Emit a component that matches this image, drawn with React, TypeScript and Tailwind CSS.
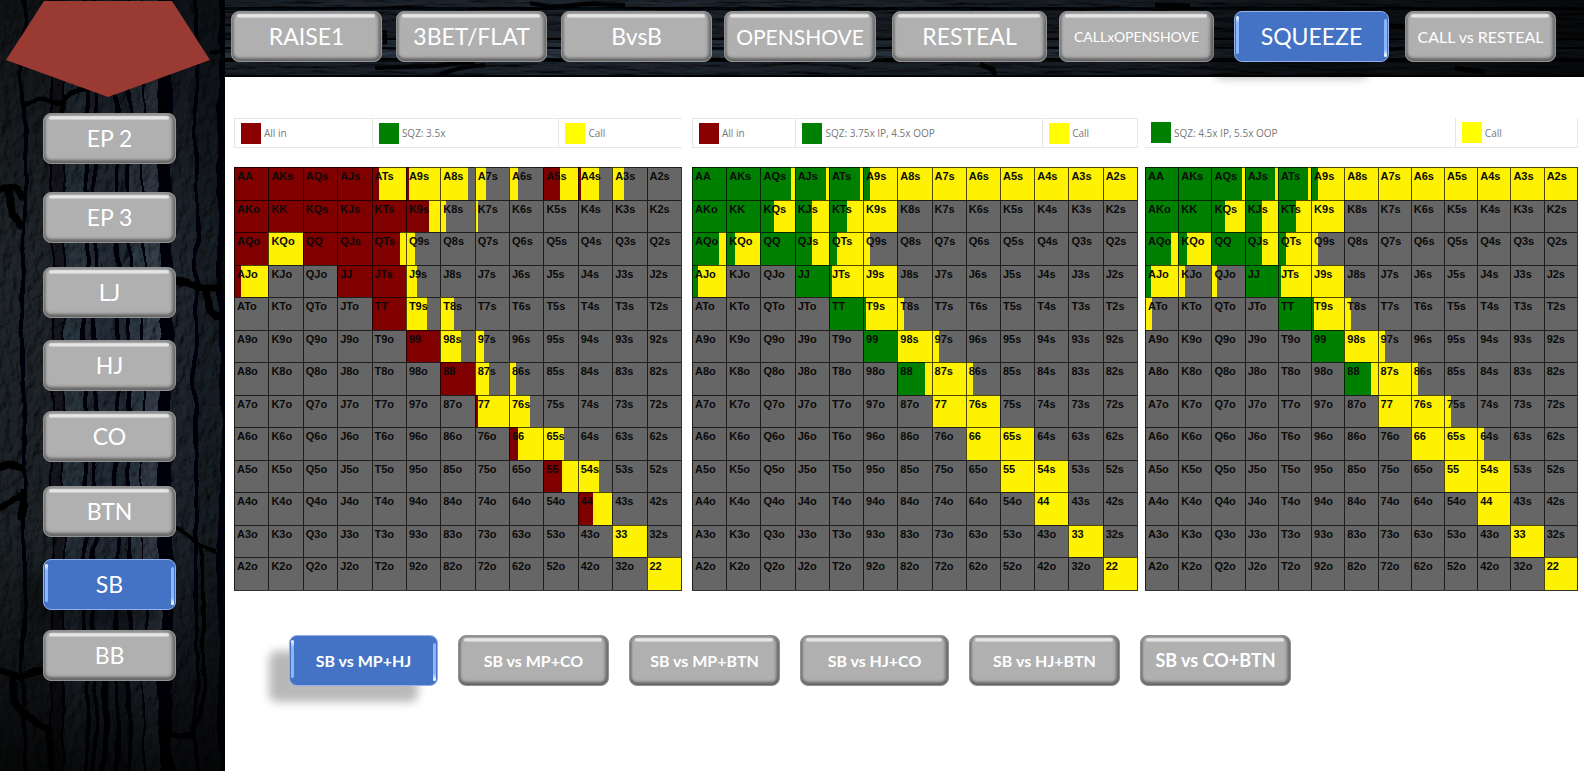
import { clsx } from "clsx";

type Split = [action: number, call: number];
type Chart = {
  name: string;
  actionColor: string;
  className: string;
  legend: { label: string; swatch: string; grow: string }[];
  frame: string;
  full: string[];
  mixed: Record<string, Split>;
  call: string[];
};

const RANKS = ["A", "K", "Q", "J", "T", "9", "8", "7", "6", "5", "4", "3", "2"];
const RED = "#800000";
const GREEN = "#008000";
const YELLOW = "#fff200";
const FOLD = "#666666";

const CALL_3X = ["A8s", "A7s", "A6s", "A5s", "A4s", "A3s", "A2s", "K9s", "J9s", "98s", "87s", "77", "76s", "66", "65s", "55", "54s", "44", "33", "22"];
const MIXED_3X: Record<string, Split> = {
  AQs: [90, 100], AJs: [90, 100], ATs: [90, 100], A9s: [20, 100],
  KQs: [40, 100], KJs: [51, 100], KTs: [54, 100],
  AQo: [80, 100], KQo: [26, 100], QJs: [51, 100], QTs: [25, 100], Q9s: [0, 20],
  AJo: [19, 100], JTs: [10, 100], T9s: [10, 100], T8s: [0, 21],
  "97s": [0, 20], "88": [80, 100], "86s": [0, 20],
};

const CHARTS: Chart[] = [
  {
    name: "Squeeze 3.5x",
    actionColor: RED,
    className: "flex-[448_1_0px]",
    frame: "border-y border-l",
    legend: [
      { label: "All in", swatch: "bg-[#8b0000]", grow: "flex-[137_1_0px]" },
      { label: "SQZ: 3.5x", swatch: "bg-[#008000]", grow: "flex-[188_1_0px]" },
      { label: "Call", swatch: "bg-[#ffff00]", grow: "flex-[122_1_0px]" },
    ],
    full: ["AA", "AKs", "AQs", "AJs", "AKo", "KK", "KQs", "KJs", "KTs", "AQo", "QQ", "QJs", "JJ", "JTs", "TT", "99", "88"],
    call: ["KQo", "33", "22"],
    mixed: {
      ATs: [20, 100], A9s: [9, 100], A8s: [0, 80], A7s: [0, 33], A6s: [0, 26],
      A5s: [50, 100], A4s: [9, 62], A3s: [0, 33], K9s: [69, 100], K8s: [0, 17],
      K7s: [0, 10], QTs: [83, 100], Q9s: [0, 26], AJo: [20, 100], J9s: [0, 33],
      T9s: [0, 61], T8s: [0, 40], "98s": [0, 61], "97s": [0, 26], "87s": [0, 40],
      "86s": [0, 21], "77": [10, 100], "76s": [0, 61], "66": [26, 100],
      "65s": [0, 61], "55": [54, 100], "54s": [0, 61], "44": [45, 100],
    },
  },
  {
    name: "Squeeze 3.75x in position, 4.5x out of position",
    actionColor: GREEN,
    className: "ml-2.5 flex-[446_1_0px]",
    frame: "border",
    legend: [
      { label: "All in", swatch: "bg-[#8b0000]", grow: "flex-[101_1_0px]" },
      { label: "SQZ: 3.75x IP, 4.5x OOP", swatch: "bg-[#008000]", grow: "flex-[251_1_0px]" },
      { label: "Call", swatch: "bg-[#ffff00]", grow: "flex-[92_1_0px]" },
    ],
    full: ["AA", "AKs", "AKo", "KK", "QQ", "JJ", "TT", "99"],
    call: CALL_3X,
    mixed: MIXED_3X,
  },
  {
    name: "Squeeze 4.5x in position, 5.5x out of position",
    actionColor: GREEN,
    className: "ml-[7px] flex-[433_1_0px]",
    frame: "border-r border-b",
    legend: [
      { label: "SQZ: 4.5x IP, 5.5x OOP", swatch: "bg-[#008000]", grow: "flex-[314_1_0px]" },
      { label: "Call", swatch: "bg-[#ffff00]", grow: "flex-[119_1_0px]" },
    ],
    full: ["AA", "AKs", "AKo", "KK", "QQ", "JJ", "TT", "99"],
    call: CALL_3X,
    mixed: { ...MIXED_3X, KJo: [0, 20], QJo: [0, 19], ATo: [0, 20], "75s": [0, 20], "64s": [0, 20] },
  },
];

function handName(row: number, col: number) {
  if (row === col) return RANKS[row] + RANKS[row];
  return row < col ? `${RANKS[row]}${RANKS[col]}s` : `${RANKS[col]}${RANKS[row]}o`;
}

function cellFill(chart: Chart, hand: string) {
  if (chart.full.includes(hand)) return chart.actionColor;
  if (chart.call.includes(hand)) return YELLOW;
  const split = chart.mixed[hand];
  if (!split) return FOLD;
  const [a, c] = split;
  return `linear-gradient(to right, ${chart.actionColor} ${a}%, ${YELLOW} ${a}% ${c}%, ${FOLD} ${c}%) border-box`;
}

function RangeChart({ chart }: { chart: Chart }) {
  return (
    <section className={clsx("min-w-0", chart.className)}>
      <ul className={clsx("flex h-[30px] border-[#e6e6e6]", chart.frame)}>
        {chart.legend.map((item, i) => (
          <li
            key={item.label}
            className={clsx("flex min-w-0 items-center gap-[3px] border-[#e6e6e6] pl-[6px]", item.grow, i > 0 && "border-l")}
          >
            <span className={clsx("h-[21px] w-5 shrink-0", item.swatch)} />
            <span className="font-['Open_Sans',sans-serif] text-[10px] leading-5 whitespace-nowrap text-[#777]">{item.label}</span>
          </li>
        ))}
      </ul>
      <table
        aria-label={chart.name}
        className="mt-[19px] h-[424px] w-full table-fixed border-separate border-spacing-0 border-r border-b border-[#333] font-['Liberation_Sans',Arial,sans-serif] text-[11px] leading-3 font-bold text-[#0a0a0a]"
      >
        <tbody>
          {RANKS.map((_, r) => (
            <tr key={r}>
              {RANKS.map((_, c) => {
                const hand = handName(r, c);
                return (
                  <td
                    key={hand}
                    className="border-t border-l border-black/70 p-0 pt-[2px] pl-[2px] text-left align-top"
                    style={{ background: cellFill(chart, hand) }}
                  >
                    {hand}
                  </td>
                );
              })}
            </tr>
          ))}
        </tbody>
      </table>
    </section>
  );
}

function BevelButton({ label, active, className }: { label: string; active?: boolean; className?: string }) {
  return (
    <button
      type="button"
      aria-pressed={!!active}
      className={clsx(
        "relative flex h-[51px] min-w-0 items-center justify-center rounded-[8px] whitespace-nowrap text-white",
        active
          ? "border border-[#8fb0ea] bg-[#4472c4] shadow-[-20px_16px_10px_rgba(0,0,0,0.28)] before:absolute before:top-[4px] before:bottom-[7px] before:left-px before:w-[3px] before:rounded-full before:bg-[linear-gradient(#ffffff,#8db4ff_18%,#8db4ff)] after:absolute after:top-[7px] after:right-px after:bottom-[4px] after:w-[3px] after:rounded-full after:bg-[linear-gradient(#8db4ff,#8db4ff_80%,#ffffff)]"
          : "border border-[#929292] bg-[#b0b0b0] shadow-[inset_0_-3px_3px_#666666,inset_-3px_0_3px_#747474,inset_2px_0_2px_#8a8a8a] before:absolute before:top-[2px] before:right-[6px] before:left-[5px] before:h-1 before:rounded-full before:bg-[linear-gradient(#d4d4d4,#ededed_50%,#c4c4c4)]",
        className,
      )}
    >
      {label}
    </button>
  );
}

const CATEGORIES = [
  { label: "RAISE1", className: "flex-[151_1_0px] text-[23px]" },
  { label: "3BET/FLAT", className: "ml-3.5 flex-[151_1_0px] text-[23px]" },
  { label: "BvsB", className: "ml-3.5 flex-[151_1_0px] text-[23px]" },
  { label: "OPENSHOVE", className: "ml-3 flex-[152_1_0px] text-[21px]" },
  { label: "RESTEAL", className: "ml-4 flex-[155_1_0px] text-[23px]" },
  { label: "CALLxOPENSHOVE", className: "ml-3 flex-[155_1_0px] text-[14px]" },
  { label: "SQUEEZE", className: "ml-5 flex-[155_1_0px] text-[23px]", active: true },
  { label: "CALL vs RESTEAL", className: "ml-4 flex-[151_1_0px] text-[16px]" },
];

const POSITIONS = [
  { label: "EP 2", className: "mt-4" },
  { label: "EP 3", className: "mt-7" },
  { label: "LJ", className: "mt-6" },
  { label: "HJ", className: "mt-[22px]" },
  { label: "CO", className: "mt-5" },
  { label: "BTN", className: "mt-6" },
  { label: "SB", className: "mt-[22px]", active: true },
  { label: "BB", className: "mt-5" },
];

const MATCHUPS = [
  { label: "SB vs MP+HJ", className: "w-[149px] text-[16px]", active: true },
  { label: "SB vs MP+CO", className: "w-[151px] text-[16px]" },
  { label: "SB vs MP+BTN", className: "w-[151px] text-[16px]" },
  { label: "SB vs HJ+CO", className: "w-[149px] text-[16px]" },
  { label: "SB vs HJ+BTN", className: "w-[151px] text-[16px]" },
  { label: "SB vs CO+BTN", className: "w-[151px] text-[18px]" },
];

const PLANKS: [number, number, string][] = [
  [-10, 32, "#1b2026"], [26, 25, "#1d2228"], [53, 10, "#14181c"], [65, 19, "#28303a"],
  [88, 5, "#20272f"], [97, 18, "#242c35"], [119, 8, "#1f262d"], [131, 12, "#2c3641"],
  [145, 14, "#303b47"], [172, 22, "#1d232a"], [198, 21, "#191e24"],
];

function StoneWall() {
  return (
    <svg aria-hidden="true" className="absolute inset-0 h-full w-full" viewBox="0 0 225 771" preserveAspectRatio="none">
      <defs>
        <filter id="stone" x="0" y="0" width="100%" height="100%">
          <feTurbulence type="fractalNoise" baseFrequency="0.03 0.02" numOctaves="3" seed="3" result="warp" />
          <feDisplacementMap in="SourceGraphic" in2="warp" scale="12" xChannelSelector="R" yChannelSelector="G" result="s" />
          <feTurbulence type="fractalNoise" baseFrequency="0.13 0.08" numOctaves="4" seed="8" result="n" />
          <feDiffuseLighting in="n" surfaceScale="3" lightingColor="#ffffff" result="l">
            <feDistantLight azimuth="220" elevation="50" />
          </feDiffuseLighting>
          <feComposite in="s" in2="l" operator="arithmetic" k1="1.3" />
        </filter>
        <linearGradient id="wallShade" x1="0" y1="0" x2="0" y2="1">
          <stop offset="0" stopColor="#000" stopOpacity="0.5" />
          <stop offset="0.35" stopColor="#000" stopOpacity="0" />
          <stop offset="0.7" stopColor="#000" stopOpacity="0.1" />
          <stop offset="1" stopColor="#000" stopOpacity="0.8" />
        </linearGradient>
      </defs>
      <rect width="225" height="771" fill="#050607" />
      <g filter="url(#stone)">
        <rect width="225" height="771" fill="#050607" />
        {PLANKS.map(([x, w, fill]) => (
          <rect key={x} x={x} y="-10" width={w} height="791" fill={fill} />
        ))}
        <g fill="none" stroke="#020304" strokeLinejoin="round">
          <path d="M24 104 40 100 62 102 70 94 90 91M64 102V125" strokeWidth="5" />
          <path d="M0 190 14 192 22 200M8 192 10 214 22 228" strokeWidth="7" />
          <path d="M0 468 10 465 24 470M0 510 12 500 24 495M22 490V520" strokeWidth="7" />
          <path d="M0 672 20 676 48 672M14 676 16 700 30 716 50 726 54 771" strokeWidth="7" />
          <path d="M166 282 184 280 200 285 224 286M205 288 212 310 220 318" strokeWidth="8" />
          <path d="M173 526 186 532 200 545 203 560 203 710 196 735M200 545 218 550" strokeWidth="4" />
          <path d="M162 732 196 736M165 712V771M105 660V771" strokeWidth="6" />
          <path d="M210 52 225 50M164 80V190" strokeWidth="4" />
        </g>
      </g>
      <rect width="225" height="771" fill="url(#wallShade)" />
    </svg>
  );
}

function WoodBeam() {
  return (
    <svg aria-hidden="true" className="absolute inset-0 h-full w-full" viewBox="0 0 1359 77" preserveAspectRatio="none">
      <defs>
        <filter id="grain" x="0" y="0" width="100%" height="100%">
          <feTurbulence type="fractalNoise" baseFrequency="0.02 0.2" numOctaves="4" seed="5" result="n" />
          <feDiffuseLighting in="n" surfaceScale="3" lightingColor="#ffffff" result="l">
            <feDistantLight azimuth="90" elevation="50" />
          </feDiffuseLighting>
          <feComposite in="SourceGraphic" in2="l" operator="arithmetic" k1="1.2" />
        </filter>
        <linearGradient id="beamShade">
          <stop offset="0" stopColor="#000" stopOpacity="0.15" />
          <stop offset="0.3" stopColor="#000" stopOpacity="0" />
          <stop offset="0.7" stopColor="#000" stopOpacity="0.3" />
          <stop offset="1" stopColor="#000" stopOpacity="0.75" />
        </linearGradient>
      </defs>
      <g filter="url(#grain)">
        <rect width="1359" height="77" fill="#050607" />
        <rect width="1359" height="7" fill="#1d242c" />
        <rect y="10" width="1359" height="28" fill="#191f26" />
        <rect y="40" width="1359" height="7" fill="#222b35" />
        <rect y="49" width="1359" height="9" fill="#2a3541" />
        <rect y="62" width="1359" height="13" fill="#1b2129" />
      </g>
      <g fill="none" stroke="#010203">
        <path d="M305 3 325 7 360 4 400 5M160 30V44M150 68 210 66 250 62M215 74 235 68 260 65" strokeWidth="4" />
        <path d="M755 64 768 70 770 77M930 5 965 6M1165 26 1190 28M1230 68 1260 72" strokeWidth="5" />
        <path d="M0 76H1359" strokeWidth="2" />
      </g>
      <rect width="1359" height="77" fill="url(#beamShade)" />
    </svg>
  );
}

export default function App() {
  return (
    <div className="flex min-h-screen bg-white font-[Lato,Carlito,sans-serif]">
      <aside className="relative w-[225px] shrink-0 overflow-hidden bg-[#0b0e12]">
        <StoneWall />
        <nav aria-label="Position" className="relative flex flex-col items-center pr-[6px] text-[23px]">
          <svg aria-hidden="true" className="h-[97px] w-52" viewBox="0 0 208 97">
            <path d="M38 1H166L204 60 102 97 0 60Z" fill="#9a3b33" />
          </svg>
          {POSITIONS.map((p) => (
            <BevelButton key={p.label} label={p.label} active={p.active} className={clsx("w-[133px]", p.className)} />
          ))}
        </nav>
      </aside>
      <div className="flex min-w-0 flex-1 flex-col">
        <header className="relative z-10 h-[77px] bg-[#0b0e12]">
          <WoodBeam />
          <nav aria-label="Category" className="relative flex pt-[11px] pr-7 pl-[6px]">
            {CATEGORIES.map((c) => (
              <BevelButton key={c.label} label={c.label} active={c.active} className={c.className} />
            ))}
          </nav>
        </header>
        <main className="pt-[41px] pb-10">
          <div className="flex pr-[6px] pl-[9px]">
            {CHARTS.map((chart) => (
              <RangeChart key={chart.name} chart={chart} />
            ))}
          </div>
          <nav aria-label="Matchup" className="mt-11 flex gap-5 pl-16 font-bold">
            {MATCHUPS.map((m) => (
              <BevelButton key={m.label} label={m.label} active={m.active} className={m.className} />
            ))}
          </nav>
        </main>
      </div>
    </div>
  );
}
